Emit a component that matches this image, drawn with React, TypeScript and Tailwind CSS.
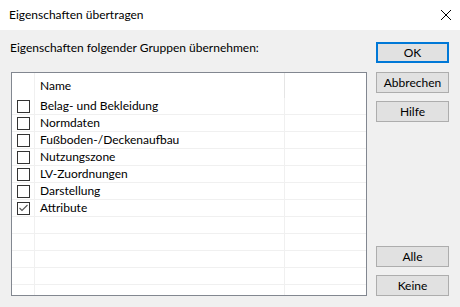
import React from "react";

const items: { label: string; checked: boolean }[] = [
  { label: "Belag- und Bekleidung", checked: false },
  { label: "Normdaten", checked: false },
  { label: "Fußboden-/Deckenaufbau", checked: false },
  { label: "Nutzungszone", checked: false },
  { label: "LV-Zuordnungen", checked: false },
  { label: "Darstellung", checked: false },
  { label: "Attribute", checked: true },
];

function Checkbox({ checked }: { checked: boolean }) {
  return (
    <div className="w-[13px] h-[13px] border border-[#333333] bg-white flex items-center justify-center">
      {checked && (
        <svg width="11" height="11" viewBox="0 0 11 11">
          <polyline points="1.5,5 4,7.5 9.5,2" fill="none" stroke="#555555" strokeWidth="1.1" />
        </svg>
      )}
    </div>
  );
}

function Btn({ label, primary, className = "" }: { label: string; primary?: boolean; className?: string }) {
  return (
    <div
      className={
        "w-[73px] h-[21px] bg-[#e1e1e1] flex items-center justify-center text-[12px] leading-[16px] text-black " +
        (primary ? "border-2 border-[#0078d7] " : "border border-[#adadad] ") +
        className
      }
    >
      {label}
    </div>
  );
}

export default function App() {
  const rows = [...items, ...Array.from({ length: 4 }, () => null)];
  return (
    <div
      className="w-[460px] h-[307px] bg-[#f0f0f0] flex flex-col overflow-hidden"
      style={{ fontFamily: 'Lato, "Noto Sans", sans-serif' }}
    >
      <div className="h-[30px] bg-white flex items-center justify-between pl-[9px] pr-[9px] shrink-0">
        <span className="text-[12px] text-black leading-[16px]">Eigenschaften übertragen</span>
        <svg width="10" height="10" viewBox="0 0 10 10">
          <path d="M0 0 L10 10 M10 0 L0 10" stroke="#000" strokeWidth="1" />
        </svg>
      </div>
      <div className="flex flex-1 pt-[10px]">
        <div className="ml-[11px] w-[356px] flex flex-col">
          <div className="h-[16px] leading-[16px] text-[12px] text-black -ml-[1px]">
            Eigenschaften folgender Gruppen übernehmen:
          </div>
          <div className="mt-[16px] h-[224px] border border-[#828790] bg-white flex flex-col overflow-hidden">
            <div className="h-[25px] flex shrink-0">
              <div className="w-[23px] border-r border-[#f0f0f0]" />
              <div className="w-[250px] border-r border-[#e5e5e5] flex items-center pl-[5px] text-[12px] leading-[16px] text-black">
                Name
              </div>
              <div className="flex-1" />
            </div>
            {rows.map((it, i) => (
              <div key={i} className="h-[17px] flex shrink-0 border-b border-[#f0f0f0]">
                <div className="w-[23px] border-r border-[#f0f0f0] flex items-center pl-[5px]">
                  {it && <Checkbox checked={it.checked} />}
                </div>
                <div className="w-[250px] border-r border-[#f0f0f0] flex items-center pl-[5px] text-[12px] text-black leading-[16px]">
                  {it?.label}
                </div>
                <div className="flex-1" />
              </div>
            ))}
            <div className="flex flex-1">
              <div className="w-[23px] border-r border-[#f0f0f0]" />
              <div className="w-[250px] border-r border-[#f0f0f0]" />
            </div>
          </div>
        </div>
        <div className="ml-[9px] pt-[2px] flex flex-col pb-[11px]">
          <Btn label="OK" primary />
          <Btn label="Abbrechen" className="mt-[9px]" />
          <Btn label="Hilfe" className="mt-[8px]" />
          <div className="flex-1" />
          <Btn label="Alle" />
          <Btn label="Keine" className="mt-[8px]" />
        </div>
      </div>
    </div>
  );
}
